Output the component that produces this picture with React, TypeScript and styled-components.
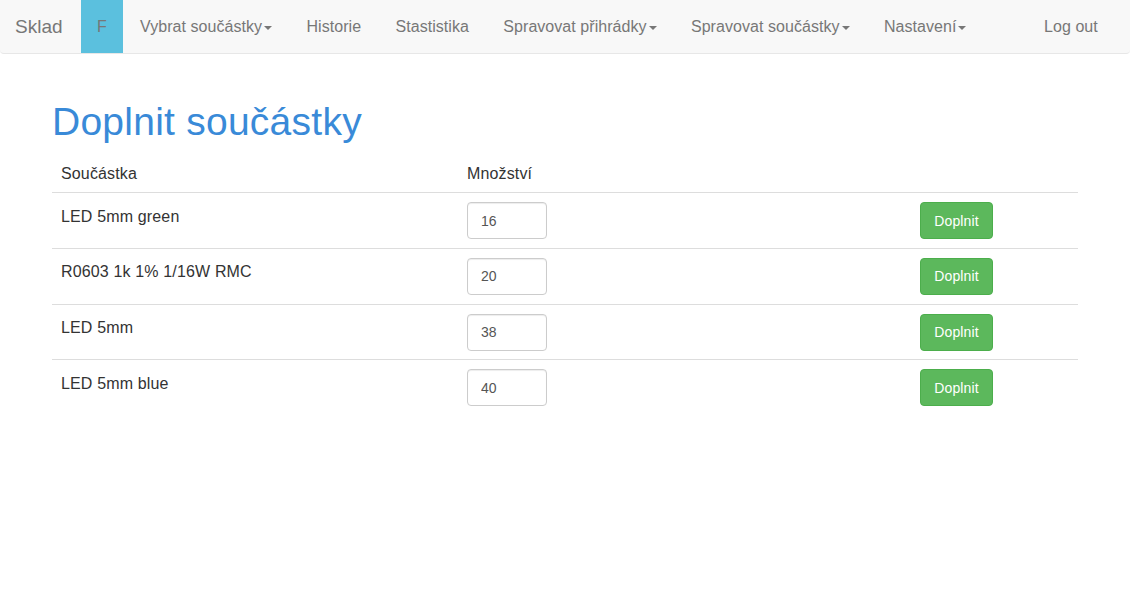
import React from "react";
import styled, { createGlobalStyle } from "styled-components";

const Global = createGlobalStyle`
  html, body { margin: 0; padding: 0; background: #fff; }
  body {
    font-family: "Liberation Sans", Arial, sans-serif;
    color: #333;
  }
  * { box-sizing: border-box; }
`;

const Navbar = styled.nav`
  display: flex;
  align-items: stretch;
  height: 54px;
  background: #f8f8f8;
  border-bottom: 1px solid #e7e7e7;
  border-radius: 0 0 4px 4px;
  padding: 0 15px 0 0;
`;

const Brand = styled.a`
  display: flex;
  align-items: center;
  padding: 0 18.5px 0 15px;
  font-size: 19px;
  color: #777;
  text-decoration: none;
`;

const NavLink = styled.a<{ $active?: boolean; $right?: boolean }>`
  display: flex;
  align-items: center;
  padding: 0 ${(p) => (p.$active ? "16px" : "17.2px")};
  font-size: 16px;
  letter-spacing: 0.05px;
  color: #777;
  text-decoration: none;
  white-space: nowrap;
  background: ${(p) => (p.$active ? "#5bc0de" : "transparent")};
  margin-left: ${(p) => (p.$right ? "auto" : "0")};
`;

const Caret = styled.span`
  display: inline-block;
  width: 0;
  height: 0;
  margin-left: 2px;
  margin-top: 2px;
  border-top: 4px solid #777;
  border-left: 4px solid transparent;
  border-right: 4px solid transparent;
`;

const Container = styled.main`
  padding: 47px 52px 0;
`;

const Title = styled.h1`
  margin: 0 0 11px;
  font-size: 39px;
  line-height: 1.1;
  font-weight: 400;
  letter-spacing: 0.25px;
  color: #398ad8;
`;

const Table = styled.table`
  width: 100%;
  border-collapse: collapse;
  font-size: 16px;
  line-height: 21.4px;
  letter-spacing: 0.15px;
`;

const Th = styled.th<{ $w?: number }>`
  text-align: left;
  font-weight: 400;
  padding: 8px 9px;
  border-bottom: 1px solid #ddd;
  width: ${(p) => (p.$w ? `${p.$w}px` : "auto")};
`;

const Row = styled.tr`
  & + & td {
    border-top: 1px solid #ddd;
  }
`;

const Td = styled.td<{ $text?: boolean }>`
  vertical-align: top;
  padding: ${(p) => (p.$text ? "12.5px 9px 8px" : "9px 9px 8.7px")};
`;

const Input = styled.input`
  display: block;
  width: 80px;
  height: 37px;
  padding: 0 13px;
  font-family: inherit;
  font-size: 14px;
  letter-spacing: 0;
  color: #555;
  background: #fff;
  border: 1px solid #ccc;
  border-radius: 4px;
  box-shadow: inset 0 1px 1px rgba(0, 0, 0, 0.075);
`;

const Button = styled.button`
  display: block;
  width: 73px;
  height: 37px;
  padding: 0;
  font-family: inherit;
  font-size: 14px;
  letter-spacing: 0.1px;
  color: #fff;
  background: #5cb85c;
  border: 1px solid #4cae4c;
  border-radius: 4px;
`;

const items = [
  { name: "LED 5mm green", qty: "16" },
  { name: "R0603 1k 1% 1/16W RMC", qty: "20" },
  { name: "LED 5mm", qty: "38" },
  { name: "LED 5mm blue", qty: "40" },
];

export default function App() {
  return (
    <>
      <Global />
      <Navbar>
        <Brand href="#">Sklad</Brand>
        <NavLink $active href="#">F</NavLink>
        <NavLink href="#">
          Vybrat součástky<Caret />
        </NavLink>
        <NavLink href="#">Historie</NavLink>
        <NavLink href="#">Stastistika</NavLink>
        <NavLink href="#">
          Spravovat přihrádky<Caret />
        </NavLink>
        <NavLink href="#">
          Spravovat součástky<Caret />
        </NavLink>
        <NavLink href="#">
          Nastavení<Caret />
        </NavLink>
        <NavLink $right href="#">Log out</NavLink>
      </Navbar>
      <Container>
        <Title>Doplnit součástky</Title>
        <Table>
          <thead>
            <tr>
              <Th $w={406}>Součástka</Th>
              <Th $w={453}>Množství</Th>
              <Th />
            </tr>
          </thead>
          <tbody>
            {items.map((it) => (
              <Row key={it.name}>
                <Td $text>{it.name}</Td>
                <Td>
                  <Input defaultValue={it.qty} />
                </Td>
                <Td>
                  <Button>Doplnit</Button>
                </Td>
              </Row>
            ))}
          </tbody>
        </Table>
      </Container>
    </>
  );
}
